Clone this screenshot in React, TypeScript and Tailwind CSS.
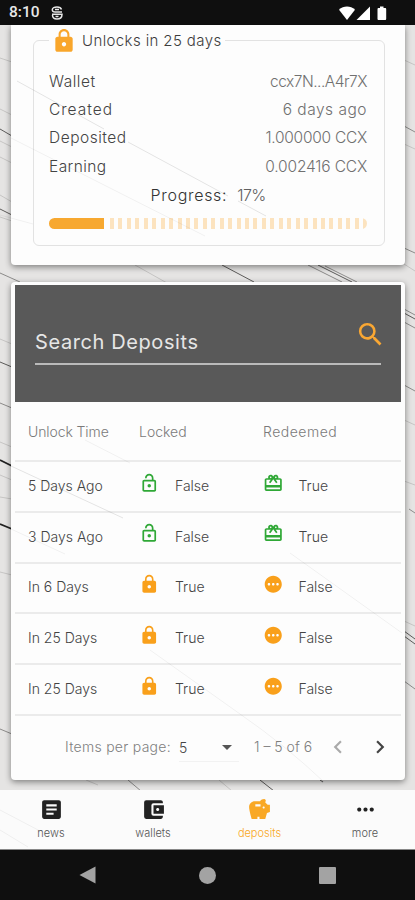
import { clsx } from 'clsx'
import {
  MdAccountBalanceWallet,
  MdArrowDropDown,
  MdArticle,
  MdChevronLeft,
  MdChevronRight,
  MdLock,
  MdMoreHoriz,
  MdOutlineLockOpen,
  MdOutlineRedeem,
  MdPending,
  MdSavings,
  MdSearch,
} from 'react-icons/md'

interface Deposit {
  unlock: string
  locked: boolean
  redeemed: boolean
}

const details = [
  { label: 'Wallet', value: 'ccx7N...A4r7X', labelClass: 'tracking-[0.5px]', valueClass: 'tracking-[-0.5px]' },
  { label: 'Created', value: '6 days ago', labelClass: 'tracking-[1px]', valueClass: 'tracking-[0.5px]' },
  { label: 'Deposited', value: '1.000000 CCX', labelClass: 'tracking-[0.5px]', valueClass: 'tracking-[-0.25px]' },
  { label: 'Earning', value: '0.002416 CCX', labelClass: 'tracking-[0.4px]', valueClass: 'tracking-[-0.15px]' },
]

const deposits: Deposit[] = [
  { unlock: '5 Days Ago', locked: false, redeemed: true },
  { unlock: '3 Days Ago', locked: false, redeemed: true },
  { unlock: 'In 6 Days', locked: true, redeemed: false },
  { unlock: 'In 25 Days', locked: true, redeemed: false },
  { unlock: 'In 25 Days', locked: true, redeemed: false },
]

const tabs = [
  { label: 'news', icon: MdArticle, width: 'w-[102px]', active: false },
  { label: 'wallets', icon: MdAccountBalanceWallet, width: 'w-[102px]', active: false },
  { label: 'deposits', icon: MdSavings, width: 'w-[111px]', active: true },
  { label: 'more', icon: MdMoreHoriz, width: 'w-[100px]', active: false },
]

// scratches of the marble wallpaper, visible around the cards
function Wallpaper() {
  return (
    <svg className="absolute inset-0" width="415" height="900" viewBox="0 0 415 900" fill="none">
      <path
        stroke="#c6c5c4"
        d="M0 58l12 4M0 109l12 6M0 141l12 6M0 157l12 6M0 195l12 7M0 217l12 4M0 442l12 5M0 475l12 5M0 497l12 2M0 572l12 3M135 265l32 18M404 60l11 5M404 144l11 5M404 264l11 7M404 420l11 5M404 481l11 4M404 621l11 5M86 780l12 5M219 780l13 11M0 339l12 5"
      />
      <path
        stroke="#8c8b8a"
        d="M0 273l20 9M0 403l12 5M0 729l12 5M325 266l32 16M308 265l34 17M404 126l11 6M404 248l11 5M404 322l11 6M404 385l11 6M409 509l6 4M404 681l11 8M128 780l13 11M404 309l11 6"
      />
      <path
        stroke="#5c5b5a"
        d="M0 129l12 7M0 209l12 6M0 362l12 5M222 265l32 17M318 265l34 17M404 313l11 6M404 631l11 8M404 636l11 8M260 780l14 11M320 780l3 2"
      />
      <path stroke="#222" strokeWidth="1.800" d="M0 460l12 6M0 524l12 5" />
    </svg>
  )
}

// the same scratches, fading through the almost opaque surfaces
function Veins() {
  return (
    <svg className="pointer-events-none absolute inset-0" width="415" height="900" viewBox="0 0 415 900" fill="none">
      <path stroke="#000" strokeOpacity="0.1" d="M17 81L104 129M128 142L228 196M238 201L266 216M11 466L123 518" />
      <path
        stroke="#000"
        strokeOpacity="0.05"
        d="M11 138L205 236M11 529L65 554M290 553L402 633M85 440L130 463M150 650L240 714M240 714Q285 745 324 782M0 830L28 847M0 810L40 831M0 215L33 224"
      />
    </svg>
  )
}

function StatusBar() {
  return (
    <div className="relative flex h-[25px] items-center bg-[#0f0f0f] pl-[9px] pr-[28px] pt-px text-[#e8e8e8]">
      <span className="font-[Roboto] text-[15.500px] font-medium leading-none">8:10</span>
      <svg className="ml-[11px]" width="12" height="14" viewBox="0 0 12 14" fill="none" stroke="currentColor" strokeWidth="1.500">
        <path d="M10.500 3.500C10 1.700 8.500 1 6 1S1.300 2 1.300 3.700 2.500 6 4 6h7M1 8.200h10c0 3-2 4.800-5 4.800s-4.500-1.800-4.500-4M4 3.500h4M4.500 10.500h3" />
      </svg>
      <svg className="ml-auto" width="48" height="14" viewBox="0 0 48 14" fill="#fff">
        <path d="M8 14 0 3.800C4.500-.6 11.500-.6 16 3.800z" />
        <path d="M31 .5V14H17.500z" />
        <path d="M38.500 3.200c0-.8.4-1.200 1.200-1.200H41V.5h3.500V2H46c.8 0 1.200.4 1.200 1.200v9.600c0 .8-.4 1.200-1.200 1.200h-6.300c-.8 0-1.200-.4-1.200-1.200z" />
      </svg>
    </div>
  )
}

function UnlockCard() {
  return (
    <section className="relative ml-[11px] mr-[10px] h-[240px] rounded-b-[4px] bg-[#fdfdfd] pb-[18px] pl-[22px] pr-[20px] pt-[15px] shadow-[0_2px_6px_rgba(0,0,0,0.45)]">
      <div className="relative h-[206px] rounded-[6px] border border-[#e2e2e2] pl-[15px] pr-[17px]">
        <div className="absolute left-[15px] top-[-13px] flex h-[26px] items-center bg-[#fdfdfd] pl-[2px] pr-[3px]">
          <MdLock className="size-[26px] text-[#f9a62b]" />
          <span className="ml-[5px] text-[15px] font-light tracking-[0.39px] text-[#3c3c3c]">Unlocks in 25 days</span>
        </div>
        <dl className="pt-[26px] text-[15.500px] font-light">
          {details.map((d) => (
            <div key={d.label} className="flex h-[28.400px] items-center justify-between">
              <dt className={clsx('text-[#444]', d.labelClass)}>{d.label}</dt>
              <dd className={clsx('text-[#707070]', d.valueClass)}>{d.value}</dd>
            </div>
          ))}
        </dl>
        <p className="mt-px flex h-[26px] items-center justify-center gap-[10px] text-[16px] font-light text-[#333]">
          <span className="tracking-[0.700px]">Progress:</span>
          <span className="tracking-[-0.700px] text-[#606060]">17%</span>
        </p>
        <div className="mt-[10px] flex h-[11px] overflow-hidden rounded-full">
          <div className="w-[55px] shrink-0 bg-[#f7a830]" />
          <div className="ml-[6px] grow bg-[repeating-linear-gradient(90deg,#fce3bf_0_4px,transparent_4px_8.440px)]" />
        </div>
      </div>
    </section>
  )
}

function DepositRow({ unlock, locked, redeemed }: Deposit) {
  return (
    <div className="flex h-[50.800px] items-center border-t-2 border-[#ebebeb] pb-[2px] pl-[13px] text-[14px] font-light text-[#444]">
      <span className="w-[111px]">{unlock}</span>
      <span className="flex w-[124px] items-center">
        {locked ? (
          <MdLock className="mb-[5px] size-[20.500px] text-[#f9a01b]" />
        ) : (
          <MdOutlineLockOpen className="mb-[5px] size-[20.500px] text-[#2fa836]" />
        )}
        <span className="ml-[15.500px]">{locked ? 'True' : 'False'}</span>
      </span>
      <span className="flex items-center">
        {redeemed ? (
          <MdOutlineRedeem className="mb-[5px] size-[20.500px] text-[#2fa836]" />
        ) : (
          <MdPending className="mb-[5px] size-[20.500px] text-[#f9a01b]" />
        )}
        <span className="ml-[15px]">{redeemed ? 'True' : 'False'}</span>
      </span>
    </div>
  )
}

function DepositsCard() {
  return (
    <section className="relative ml-[11px] mr-[10px] mt-[17px] h-[498px] rounded-[4px] bg-[#fdfdfd] px-[4px] pt-[3px] shadow-[0_2px_6px_rgba(0,0,0,0.45)]">
      <div className="h-[117px] bg-[#595959] px-[20px] pt-[32px]">
        <div className="flex h-[48px] items-start justify-between border-b-2 border-[#bababa]">
          <span className="mt-[11px] text-[20px] leading-[28px] tracking-[0.600px] text-[#e6e6e6]">Search Deposits</span>
          <MdSearch className="mr-[-5px] mt-[2px] size-[31px] text-[#f9a733]" />
        </div>
      </div>
      <div className="flex h-[58px] items-center pl-[13px] text-[14px] font-light text-[#7a7a7a]">
        <span className="w-[111px] tracking-[-0.100px]">Unlock Time</span>
        <span className="w-[124px]">Locked</span>
        <span className="tracking-[0.500px]">Redeemed</span>
      </div>
      {deposits.map((d, i) => (
        <DepositRow key={i} {...d} />
      ))}
      <div className="flex h-[64px] items-center border-t-2 border-[#ebebeb] pl-[50px] text-[14px] font-light text-[#808080]">
        <span className="tracking-[0.280px]">Items per page:</span>
        <span className="ml-[8px] mt-[2px] flex h-[28px] w-[60px] items-center justify-between border-b border-[#f2f2f2]">
          <span className="text-[#444]">5</span>
          <MdArrowDropDown className="size-[24px] text-[#555]" />
        </span>
        <span className="ml-[15px] w-[61px]">1 – 5 of 6</span>
        <MdChevronLeft className="ml-[10px] size-[26px] text-[#aaa]" />
        <MdChevronRight className="ml-[16px] size-[26px] text-[#444]" />
      </div>
    </section>
  )
}

function TabBar() {
  return (
    <nav className="relative mt-[10px] flex h-[60px] border-b border-[#888] bg-[#fbfbfb]">
      {tabs.map(({ label, icon: Icon, width, active }) => (
        <div key={label} className={clsx('flex flex-col items-center pt-[7px]', width, active ? 'text-[#f9a825]' : 'text-[#222]')}>
          <Icon className="size-[25px]" />
          <span className={clsx('mt-[3px] text-[11px] font-light leading-[16px]', !active && 'text-[#555]')}>{label}</span>
        </div>
      ))}
    </nav>
  )
}

function AndroidNav() {
  return (
    <div className="relative flex h-[50px] items-center justify-between bg-[#0f0f0f] px-[79px]">
      <svg width="17" height="18" viewBox="0 0 17 18" fill="#a3a3a3">
        <path d="M16.500.5v17L.5 9z" />
      </svg>
      <div className="size-[17px] rounded-full bg-[#a3a3a3]" />
      <div className="size-[17px] rounded-[1px] bg-[#a3a3a3]" />
    </div>
  )
}

export default function App() {
  return (
    <main className="relative h-[900px] w-[415px] overflow-hidden bg-[#e5e4e3] font-[Inter,sans-serif]">
      <Wallpaper />
      <StatusBar />
      <UnlockCard />
      <DepositsCard />
      <TabBar />
      <AndroidNav />
      <Veins />
    </main>
  )
}
